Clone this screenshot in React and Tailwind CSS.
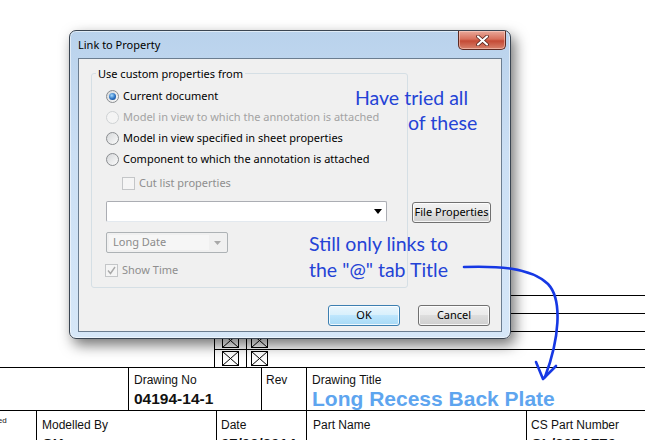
import React from 'react';

const ui = { fontFamily: '"Noto Sans", "Open Sans", sans-serif' };
const cad = { fontFamily: '"Liberation Sans", Arial, sans-serif' };
const note = { fontFamily: 'Lato, "Open Sans", sans-serif' };

function Radio({ label, checked, disabled }) {
    return (
        <div className="h-[21px] flex items-center gap-[4px]">
            <span
                className={`w-[13px] h-[13px] rounded-full border flex items-center justify-center ${
                    disabled
                        ? 'border-[#cfd2d4] bg-[#f4f4f4]'
                        : 'border-[#8a8d90] bg-gradient-to-br from-[#d6d8da] to-[#fbfbfb]'
                }`}
            >
                {checked && (
                    <span className="w-[7px] h-[7px] rounded-full bg-[radial-gradient(circle_at_40%_35%,#a7dcff,#2a70c0_55%,#0c3b7a)]" />
                )}
            </span>
            <span className={disabled ? 'text-[#a3a3a3]' : 'text-black'}>{label}</span>
        </div>
    );
}

function Check({ label, checked }) {
    return (
        <div className="h-[21px] flex items-center gap-[4px] text-[#8e8e8e]">
            <span className="w-[13px] h-[13px] border border-[#c4c6c8] bg-[#f5f5f5] flex items-center justify-center">
                {checked && (
                    <svg width="9" height="9" viewBox="0 0 9 9">
                        <path d="M1 4.5 L3.5 7.5 L8 1" fill="none" stroke="#a9a9a9" strokeWidth="1.4" />
                    </svg>
                )}
            </span>
            <span>{label}</span>
        </div>
    );
}

function XBox() {
    return (
        <svg width="17" height="15" viewBox="0 0 17 15">
            <rect x="0.5" y="0.5" width="16" height="14" fill="white" stroke="black" />
            <path d="M0.5 0.5 L16.5 14.5 M16.5 0.5 L0.5 14.5" stroke="black" />
        </svg>
    );
}

function WinButton({ children, primary, className = '' }) {
    return (
        <div
            className={`h-[21px] rounded-[3px] border flex items-center justify-center text-black shadow-[inset_0_0_0_1px_rgba(255,255,255,0.8)] ${
                primary
                    ? 'border-[#3c7fb1] bg-[linear-gradient(to_bottom,#eaf6fd_0%,#d9f0fc_45%,#bee6fd_50%,#a7d9f5_100%)]'
                    : 'border-[#707070] bg-[linear-gradient(to_bottom,#f2f2f2_0%,#ebebeb_45%,#dddddd_50%,#cfcfcf_100%)]'
            } ${className}`}
        >
            {children}
        </div>
    );
}

export default function App() {
    return (
        <div className="relative w-[645px] h-[440px] overflow-hidden bg-white" style={cad}>
            {/* Drawing sheet behind the dialog */}
            <div className="h-[295px]" />
            <div className="ml-[214px] h-[18px] border-t border-black" />
            <div className="ml-[214px] h-[18px] border-t border-black" />
            {[0, 1].map(i => (
                <div key={i} className="ml-[214px] h-[18px] border-t border-black flex">
                    <div className="w-[32px] h-full border-l border-black flex items-center justify-center">
                        <XBox />
                    </div>
                    <div className="w-[25px] h-full border-l border-black flex items-center justify-center">
                        <XBox />
                    </div>
                </div>
            ))}

            {/* Title block */}
            <div className="h-[43px] border-t border-black flex text-[12px] text-[#111]">
                <div className="w-[128px]" />
                <div className="w-[133px] border-l border-black pl-[5px] pt-[5px]">
                    <div className="leading-[15px]">Drawing No</div>
                    <div className="text-[15.5px] font-bold leading-[18px] mt-[2px]">04194-14-1</div>
                </div>
                <div className="w-[45px] border-l border-black pl-[4px] pt-[5px]">
                    <div className="leading-[15px]">Rev</div>
                </div>
                <div className="flex-1 border-l border-black pl-[5px] pt-[5px]">
                    <div className="leading-[15px]">Drawing Title</div>
                    <div className="text-[21px] font-bold leading-[21px] text-[#5ea5ef]">Long Recess Back Plate</div>
                </div>
            </div>
            <div className="h-[40px] border-t border-black flex text-[12px] text-[#111]">
                <div className="w-[36px] pt-[5px] overflow-hidden">
                    <div className="-ml-[20px] text-[8px] leading-[10px]">Verified</div>
                </div>
                <div className="w-[180px] border-l border-black pl-[5px] pt-[7px]">
                    <div className="leading-[15px]">Modelled By</div>
                    <div className="text-[15px] font-bold leading-[18px] mt-[2px]">CK</div>
                </div>
                <div className="w-[90px] border-l border-black pl-[4px] pt-[7px]">
                    <div className="leading-[15px]">Date</div>
                    <div className="text-[15px] font-bold leading-[18px] mt-[2px]">07/09/2014</div>
                </div>
                <div className="w-[220px] border-l border-black pl-[6px] pt-[7px]">
                    <div className="leading-[15px]">Part Name</div>
                </div>
                <div className="flex-1 border-l border-black pl-[4px] pt-[7px]">
                    <div className="leading-[15px]">CS Part Number</div>
                    <div className="text-[15px] font-bold leading-[18px] mt-[2px]">CL/307A770</div>
                </div>
            </div>

            {/* Dialog window */}
            <div
                className="absolute left-[69px] top-[30px] w-[442px] h-[309px] rounded-[7px] border border-[#3a4552] bg-[linear-gradient(to_bottom,#b9d2ec,#cbdff4_40%,#d6e7f8)] shadow-[inset_0_0_0_1px_rgba(255,255,255,0.55),4px_6px_14px_rgba(0,0,0,0.55)] flex flex-col text-[11px]"
                style={ui}
            >
                <div className="h-[27px] flex items-start justify-between pl-[8px] pr-[4px]">
                    <span className="pt-[6px] leading-[16px] text-black">Link to Property</span>
                    <div className="w-[48px] h-[19px] rounded-b-[5px] border border-t-0 border-[#5d2a22] bg-[linear-gradient(to_bottom,#e9a99a,#d7705c_45%,#c44a35_55%,#d8826c)] flex items-center justify-center shadow-[inset_0_0_0_1px_rgba(255,220,210,0.5)]">
                        <svg width="13" height="11" viewBox="0 0 13 11">
                            <path d="M2 1.5 L11 9.5 M11 1.5 L2 9.5" stroke="#4a1a14" strokeWidth="3.6" strokeLinecap="round" />
                            <path d="M2 1.5 L11 9.5 M11 1.5 L2 9.5" stroke="white" strokeWidth="2.2" strokeLinecap="round" />
                        </svg>
                    </div>
                </div>

                <div className="mx-[8px] mb-[6px] flex-1 border border-[#6b7d90] bg-[#f0f0f0] flex flex-col">
                    <div className="flex items-start pl-[12px] pt-[7px]">
                        <fieldset className="w-[317px] h-[222px] border border-[#d5dfe5] rounded-[3px]">
                            <legend className="ml-[4px] px-[2px] leading-[15px] text-black">Use custom properties from</legend>
                            <div className="pl-[14px] pt-[5px]">
                                <Radio label="Current document" checked />
                                <Radio label="Model in view to which the annotation is attached" disabled />
                                <Radio label="Model in view specified in sheet properties" />
                                <Radio label="Component to which the annotation is attached" />
                                <div className="pl-[16px] mt-[3px]">
                                    <Check label="Cut list properties" />
                                </div>
                                <div className="mt-[7px] w-[281px] h-[21px] rounded-[2px] border border-[#abadb3] border-b-[#e3e9ef] bg-white flex items-center justify-end pr-[4px]">
                                    <svg width="8" height="5" viewBox="0 0 8 5">
                                        <path d="M0 0 H8 L4 5 Z" fill="black" />
                                    </svg>
                                </div>
                                <div className="mt-[10px] w-[122px] h-[21px] rounded-[2px] border border-[#adb2b5] bg-[#f0f0f0] flex items-center p-[2px]">
                                    <div className="w-[100px] h-full bg-[#f6f6f6] pl-[4px] flex items-center text-[#8b8b8b]">Long Date</div>
                                    <div className="flex-1 flex items-center justify-center">
                                        <svg width="7" height="4" viewBox="0 0 7 4">
                                            <path d="M0 0 H7 L3.5 4 Z" fill="#a8a8a8" />
                                        </svg>
                                    </div>
                                </div>
                                <div className="mt-[7px] -ml-[1px]">
                                    <Check label="Show Time" checked />
                                </div>
                            </div>
                        </fieldset>
                        <div className="ml-[4px] pt-[136px]">
                            <WinButton className="w-[79px]">File Properties</WinButton>
                        </div>
                    </div>
                    <div className="mt-[17px] pr-[11px] flex justify-end gap-[18px]">
                        <WinButton primary className="w-[72px]">OK</WinButton>
                        <WinButton className="w-[72px]">Cancel</WinButton>
                    </div>
                </div>
            </div>

            {/* Hand-written notes over the screenshot */}
            <div className="absolute left-[355px] top-[85px] text-[19.5px] leading-[25px] text-[#2443d6]" style={note}>Have tried all</div>
            <div className="absolute left-[408px] top-[110px] text-[19.5px] leading-[25px] text-[#2443d6]" style={note}>of these</div>
            <div className="absolute left-[309px] top-[231px] text-[19.5px] leading-[26px] text-[#2443d6]" style={note}>
                <div>Still only links to</div>
                <div>the "@" tab Title</div>
            </div>
            <svg className="absolute left-0 top-0 pointer-events-none" width="645" height="440" viewBox="0 0 645 440">
                <path
                    d="M464 267 C497 266 530 267 548 284 C563 300 559 340 545 377"
                    fill="none"
                    stroke="#1638e4"
                    strokeWidth="2.6"
                    strokeLinecap="round"
                />
                <path d="M536 362 L543 379 L556 366" fill="none" stroke="#1638e4" strokeWidth="2.6" strokeLinecap="round" strokeLinejoin="round" />
            </svg>
        </div>
    );
}
